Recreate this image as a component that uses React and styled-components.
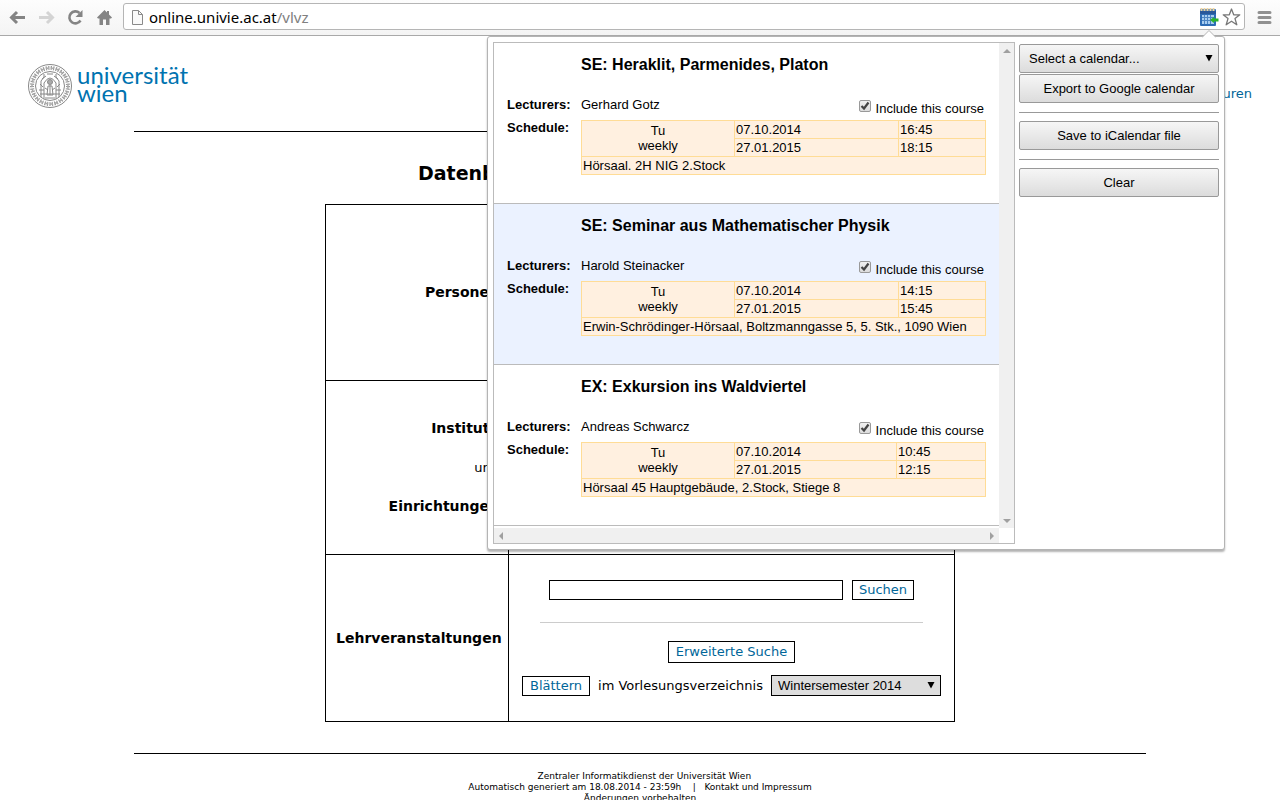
import React from "react";
import styled, { createGlobalStyle } from "styled-components";

const GlobalStyle = createGlobalStyle`
  * { box-sizing: border-box; }
  body { margin: 0; background: #fff; color: #000; font-family: "DejaVu Sans", Verdana, sans-serif; font-size: 13px; }
  button, input, select { margin: 0; }
`;

const Browser = styled.div`
  position: relative;
  display: flex;
  flex-direction: column;
  height: 100vh;
  overflow: hidden;
`;

/* ---------- browser toolbar ---------- */

const Toolbar = styled.header`
  display: flex;
  flex: none;
  align-items: center;
  height: 36px;
  padding: 0 8px 2px 7px;
  background: linear-gradient(#fdfdfd, #f4f4f4);
  border-bottom: 1px solid #a9a9a9;
`;

const ToolButton = styled.button`
  display: flex;
  flex: none;
  width: 20px;
  height: 20px;
  margin-right: 9px;
  padding: 0;
  border: 0;
  background: none;
`;

const AddressBar = styled.div`
  display: flex;
  flex: 1;
  align-items: center;
  height: 27px;
  margin-right: 11px;
  padding: 0 2px 0 7px;
  border: 1px solid #b5b5b5;
  border-radius: 3px;
  background: #fff;
`;

const Url = styled.div`
  flex: 1;
  margin-left: 5px;
  font: 15px/20px "Noto Sans", sans-serif;
  color: #000;
  span { color: #808080; }
`;

const BarButton = styled(ToolButton)`
  margin: 0 0 0 3px;
`;

const MenuButton = styled(ToolButton)`
  width: 16px;
  margin: 0;
`;

/* ---------- university page ---------- */

const Page = styled.div`
  flex: 1;
  min-height: 0;
  overflow: hidden;
`;

const Masthead = styled.div`
  display: flex;
  align-items: center;
  justify-content: space-between;
  height: 95px;
  padding: 5px 28px 0;
`;

const Logo = styled.a`
  display: flex;
  align-items: center;
  gap: 4px;
  color: #0073b0;
  text-decoration: none;
`;

const Wordmark = styled.span`
  display: block;
  padding-bottom: 5px;
  font: 24px/18px Lato, sans-serif;
`;

const TextLink = styled.a`
  color: #006699;
  text-decoration: none;
`;

const HeaderNav = styled.nav`
  padding-top: 14px;
`;

const PageRule = styled.hr`
  width: calc(100% - 268px);
  margin: 0 auto;
  border: 0;
  border-top: 1px solid #000;
`;

const Heading = styled.h1`
  width: 444px;
  margin: 29px auto 19px;
  font-size: 19px;
  line-height: 24px;
`;

const Directory = styled.table`
  width: 630px;
  margin: 0 auto;
  table-layout: fixed;
  border-collapse: collapse;
  border: 1px solid #000;
`;

const DirectoryRow = styled.tr`
  height: ${(p) => p.$height}px;
`;

const RowLabel = styled.th`
  width: 183px;
  padding: 0 9px 0 10px;
  border: 1px solid #000;
  text-align: right;
  white-space: nowrap;
  font-size: 14px;
  line-height: 39px;
  small { font-size: 13px; font-weight: normal; }
`;

const RowContent = styled.td`
  padding: 0 12px;
  border: 1px solid #000;
`;

const SearchForm = styled.form`
  display: flex;
  flex-direction: column;
  align-items: center;
`;

const FormLine = styled.div`
  display: flex;
  align-items: center;
  gap: ${(p) => p.$gap}px;
`;

const BrowseLine = styled(FormLine)`
  margin-top: 12px;
  white-space: nowrap;
`;

const SearchInput = styled.input`
  width: 294px;
  height: 20px;
  padding: 0 4px;
  border: 1px solid #000;
  background: #fff;
`;

const OutlineButton = styled.button`
  height: ${(p) => (p.$tall ? 22 : 20)}px;
  padding: 0 ${(p) => (p.$wide ? 7 : 6)}px;
  border: 1px solid #000;
  background: #fff;
  color: #006699;
  font: 13px/18px "DejaVu Sans", Verdana, sans-serif;
`;

const FormRule = styled.hr`
  width: 383px;
  margin: 22px 0 18px;
  border: 0;
  border-top: 1px solid #ccc;
`;

const Footer = styled.footer`
  margin-top: 31px;
  text-align: center;
  font-size: 9px;
  line-height: 11px;
  p { margin: 0; white-space: pre; }
  a { color: inherit; text-decoration: none; }
`;

const FooterText = styled.div`
  padding-top: 17px;
`;

/* ---------- select boxes ---------- */

const SelectFrame = styled.span`
  position: relative;
  display: block;
  width: ${(p) => p.$width};
`;

const SelectArrow = styled.svg`
  position: absolute;
  top: calc(50% - 4px);
  right: 6px;
  pointer-events: none;
`;

const SemesterSelect = styled.select`
  appearance: none;
  display: block;
  width: 100%;
  height: 21px;
  padding: 0 6px;
  border: 1px solid #000;
  border-radius: 0;
  background: #ddd;
  color: #000;
  font: 13px "Liberation Sans", Arial, sans-serif;
`;

/* ---------- extension popup ---------- */

const Popup = styled.aside`
  position: absolute;
  top: 36px;
  right: 55px;
  display: flex;
  gap: 4px;
  width: 738px;
  height: 514px;
  padding: 5px;
  border: 1px solid #b4b4b4;
  border-radius: 3px;
  background: #fff;
  box-shadow: 0 2px 2px rgba(0, 0, 0, 0.3);
  font: 13px/15px "Liberation Sans", Arial, sans-serif;
`;

const PopupTip = styled.svg`
  position: absolute;
  top: -7px;
  right: 8px;
`;

const CoursePane = styled.div`
  display: grid;
  flex: 1;
  grid-template: 1fr 15px / 1fr 15px;
  border: 1px solid #bbb;
`;

const CourseList = styled.div`
  overflow: hidden;
`;

const Course = styled.article`
  display: grid;
  grid-template-columns: 62px 1fr;
  grid-template-rows: 54px 22px 1fr;
  column-gap: 12px;
  height: 161px;
  padding: 0 13px;
  border-bottom: 1px solid #bbb;
  background: ${(p) => (p.$shaded ? "#ebf2ff" : "#fff")};
`;

const CourseTitle = styled.h2`
  grid-column: 2;
  margin: 13px 0 0;
  font-size: 16px;
  line-height: 18px;
`;

const FieldLabel = styled.b`
  grid-column: 1;
  padding-top: ${(p) => p.$top || 0}px;
`;

const LecturerLine = styled.div`
  display: flex;
  justify-content: space-between;
  padding-right: 2px;
`;

const Include = styled.label`
  display: flex;
  align-items: flex-start;
  gap: 5px;
  padding-top: 3px;
  line-height: 17px;
`;

const CheckFrame = styled.span`
  position: relative;
  display: block;
  width: 12px;
  height: 12px;
`;

const CheckBox = styled.input`
  appearance: none;
  display: block;
  width: 12px;
  height: 12px;
  border: 1px solid #999;
  border-radius: 2px;
  background: linear-gradient(#f0f0f0, #dcdcdc);
`;

const CheckMark = styled.svg`
  position: absolute;
  inset: 0;
  pointer-events: none;
`;

const Schedule = styled.table`
  width: 405px;
  height: 55px;
  margin-top: 1px;
  table-layout: fixed;
  border-collapse: collapse;
  background: #fff0e0;
  col:nth-child(1) { width: 153px; }
  col:nth-child(3) { width: ${(p) => p.$timeWidth}px; }
  td { padding: 1px; border: 1px solid #ffdc96; }
  td[rowspan] { padding-bottom: 3px; text-align: center; }
`;

const Scrollbar = styled.div`
  display: flex;
  flex-direction: ${(p) => (p.$horizontal ? "row" : "column")};
  align-items: center;
  justify-content: space-between;
  padding: ${(p) => (p.$horizontal ? "0 3px" : "4px 0 3px")};
  background: #f0f0f0;
`;

const Actions = styled.div`
  display: flex;
  flex-direction: column;
  width: 200px;
  padding-top: 2px;
`;

const actionLook = `
  width: 100%;
  height: 29px;
  border: 1px solid #999;
  border-radius: 2px;
  background: linear-gradient(#f6f6f6, #dcdcdc);
  color: #000;
  font: 13px "Liberation Sans", Arial, sans-serif;
`;

const ActionButton = styled.button`
  ${actionLook}
  padding: 0;
`;

const ActionSelect = styled.select`
  ${actionLook}
  appearance: none;
  display: block;
  margin-bottom: 1px;
  padding: 0 9px;
`;

const ActionRule = styled.hr`
  width: 100%;
  margin: 9px 0 8px;
  border: 0;
  border-top: 1px solid #999;
`;

/* ---------- drawings ---------- */

const BackIcon = ({ color }) => (
  <svg width="20" height="20" viewBox="0 0 20 20" fill="none" stroke={color} strokeWidth="3">
    <path d="M18 10.500H5M10 5L4.500 10.500L10 16" />
  </svg>
);

const ForwardIcon = ({ color }) => (
  <svg width="20" height="20" viewBox="0 0 20 20" fill="none" stroke={color} strokeWidth="3">
    <path d="M3 10.500H16M11 5L16.500 10.500L11 16" />
  </svg>
);

const ReloadIcon = () => (
  <svg width="20" height="20" viewBox="0 0 20 20">
    <path d="M15.500 13.500A6 6 0 1 1 14.500 6" fill="none" stroke="#848484" strokeWidth="2.6" />
    <path d="M17.500 3V10H10.500Z" fill="#848484" />
  </svg>
);

const HomeIcon = () => (
  <svg width="20" height="20" viewBox="0 0 20 20" fill="#848484">
    <path d="M10.500 3L13 5.500V4H15V7.500L18 10.500L17 11.500H15.500V18H12V12.500H9V18H5.500V11.500H4L3 10.500Z" />
  </svg>
);

const PageIcon = () => (
  <svg width="13" height="16" viewBox="0 0 13 16" fill="#fafafa" stroke="#8a8a8a">
    <path d="M1.500 1.500H7.500L11.500 5.500V15.500H1.500Z" />
    <path d="M7.500 1.500V5.500H11.500" fill="none" />
  </svg>
);

const CalendarIcon = () => (
  <svg width="20" height="20" viewBox="0 0 20 20">
    <rect x="1" y="2" width="16" height="17" rx="1" fill="#2e6cb5" />
    <rect x="1" y="4" width="16" height="3" fill="#28579a" />
    <rect x="3" y="8" width="12" height="9" fill="#a8cdf0" />
    <path d="M3 10.500H15M3 13.500H15M5.500 8V17M8.500 8V17M11.500 8V17" stroke="#4d84c2" />
    <path d="M2.500 1V4M5.500 1V4M8.500 1V4M11.500 1V4M14.500 1V4" stroke="#ecd3a0" strokeWidth="2" />
    <path d="M11 13L15 10V11.500H19.500V14.500H15V16Z" fill="#2cb52c" />
  </svg>
);

const StarIcon = () => (
  <svg width="20" height="20" viewBox="0 0 20 20" fill="#fff" stroke="#777" strokeWidth="1.300" strokeLinejoin="round">
    <path d="M9.500 2L11.700 7.800H17.800L13 11.600L14.800 17.800L9.500 14.200L4.200 17.800L6 11.600L1.200 7.800H7.300Z" />
  </svg>
);

const MenuIcon = () => (
  <svg width="16" height="20" viewBox="0 0 16 20" stroke="#909090" strokeWidth="3" strokeLinecap="round">
    <path d="M3 5.500H14M3 10.500H14M3 15.500H14" />
  </svg>
);

const Seal = () => (
  <svg width="45" height="45" viewBox="0 0 45 45" fill="none" stroke="#888">
    <circle cx="22" cy="22" r="21.500" />
    <circle cx="22" cy="22" r="18" strokeWidth="4" strokeDasharray="1.200 1.300" stroke="#999" />
    <circle cx="22" cy="22" r="18" strokeWidth="1.500" stroke="#aaa" strokeDasharray="3 2" />
    <circle cx="22" cy="22" r="14.500" />
    <path d="M13 33V17L16 13V10M31 33V17L28 13V10M16 33V19Q22 9 28 19V33M11 26H16M28 26H33M12 30H32M12 20L15 23M32 20L29 23" />
    <circle cx="22" cy="18" r="2.500" fill="#aaa" />
    <path d="M19 31L20 22H24L25 31ZM17 24L20 26M27 24L24 26M22 21V31" />
    <path d="M14 15L18 12M30 15L26 12M19 10H25M15 34H29" />
  </svg>
);

const DownTriangle = () => (
  <SelectArrow width="8" height="8" viewBox="0 0 8 8">
    <path d="M0.500 0H7.500L4 6.500Z" fill="#000" />
  </SelectArrow>
);

const trianglePaths = {
  up: "M0 6L4 2L8 6Z",
  down: "M0 2L4 6L8 2Z",
  left: "M6 0L2 4L6 8Z",
  right: "M2 0L6 4L2 8Z",
};

const ScrollArrow = ({ to }) => (
  <svg width="8" height="8" viewBox="0 0 8 8" fill="#a0a0a0">
    <path d={trianglePaths[to]} />
  </svg>
);

/* ---------- content ---------- */

const courses = [
  {
    title: "SE: Heraklit, Parmenides, Platon",
    lecturer: "Gerhard Gotz",
    start: "16:45",
    end: "18:15",
    place: "Hörsaal. 2H NIG 2.Stock",
    timeWidth: 87,
  },
  {
    title: "SE: Seminar aus Mathematischer Physik",
    lecturer: "Harold Steinacker",
    start: "14:15",
    end: "15:45",
    place: "Erwin-Schrödinger-Hörsaal, Boltzmanngasse 5, 5. Stk., 1090 Wien",
    timeWidth: 87,
  },
  {
    title: "EX: Exkursion ins Waldviertel",
    lecturer: "Andreas Schwarcz",
    start: "10:45",
    end: "12:15",
    place: "Hörsaal 45 Hauptgebäude, 2.Stock, Stiege 8",
    timeWidth: 89,
  },
];

const CourseItem = ({ course, shaded }) => (
  <Course $shaded={shaded}>
    <CourseTitle>{course.title}</CourseTitle>
    <FieldLabel>Lecturers:</FieldLabel>
    <LecturerLine>
      <span>{course.lecturer}</span>
      <Include>
        <CheckFrame>
          <CheckBox type="checkbox" defaultChecked />
          <CheckMark width="12" height="12" viewBox="0 0 12 12" fill="none" stroke="#444" strokeWidth="2.200">
            <path d="M2.500 6L5 8.500L9.500 2.500" />
          </CheckMark>
        </CheckFrame>
        Include this course
      </Include>
    </LecturerLine>
    <FieldLabel $top={1}>Schedule:</FieldLabel>
    <div>
      <Schedule $timeWidth={course.timeWidth}>
        <colgroup>
          <col />
          <col />
          <col />
        </colgroup>
        <tbody>
          <tr>
            <td rowSpan={2}>
              Tu
              <br />
              weekly
            </td>
            <td>07.10.2014</td>
            <td>{course.start}</td>
          </tr>
          <tr>
            <td>27.01.2015</td>
            <td>{course.end}</td>
          </tr>
          <tr>
            <td colSpan={3}>{course.place}</td>
          </tr>
        </tbody>
      </Schedule>
    </div>
  </Course>
);

const CourseSearch = () => (
  <SearchForm>
    <FormLine $gap={9}>
      <SearchInput type="text" aria-label="Lehrveranstaltungen" />
      <OutlineButton type="button">Suchen</OutlineButton>
    </FormLine>
    <FormRule />
    <OutlineButton type="button" $tall $wide>Erweiterte Suche</OutlineButton>
    <BrowseLine $gap={8}>
      <OutlineButton type="button" $wide>Blättern</OutlineButton>
      <label htmlFor="semester">im Vorlesungsverzeichnis</label>
      <SelectFrame $width="170px">
        <SemesterSelect id="semester">
          <option>Wintersemester 2014</option>
        </SemesterSelect>
        <DownTriangle />
      </SelectFrame>
    </BrowseLine>
  </SearchForm>
);

export default function App() {
  return (
    <Browser>
      <GlobalStyle />
      <Toolbar>
        <ToolButton aria-label="Back"><BackIcon color="#848484" /></ToolButton>
        <ToolButton aria-label="Forward"><ForwardIcon color="#d4d4d4" /></ToolButton>
        <ToolButton aria-label="Reload"><ReloadIcon /></ToolButton>
        <ToolButton aria-label="Home"><HomeIcon /></ToolButton>
        <AddressBar>
          <PageIcon />
          <Url>online.univie.ac.at<span>/vlvz</span></Url>
          <BarButton aria-label="Calendar export"><CalendarIcon /></BarButton>
          <BarButton aria-label="Bookmark"><StarIcon /></BarButton>
        </AddressBar>
        <MenuButton aria-label="Menu"><MenuIcon /></MenuButton>
      </Toolbar>

      <Page>
        <Masthead>
          <Logo href="#home">
            <Seal />
            <Wordmark>universität<br />wien</Wordmark>
          </Logo>
          <HeaderNav>
            <TextLink href="#strukturen">Strukturen</TextLink>
          </HeaderNav>
        </Masthead>
        <PageRule />
        <Heading>Datenbank</Heading>
        <Directory>
          <tbody>
            <DirectoryRow $height={176}>
              <RowLabel scope="row">Personen</RowLabel>
              <RowContent />
            </DirectoryRow>
            <DirectoryRow $height={174}>
              <RowLabel scope="row">
                Institute<br /><small>und</small><br />Einrichtungen
              </RowLabel>
              <RowContent />
            </DirectoryRow>
            <DirectoryRow $height={167}>
              <RowLabel scope="row">Lehrveranstaltungen</RowLabel>
              <RowContent>
                <CourseSearch />
              </RowContent>
            </DirectoryRow>
          </tbody>
        </Directory>
        <Footer>
          <PageRule />
          <FooterText>
            <p>{"\u00a0\u00a0\u00a0Zentraler Informatikdienst der Universität Wien"}</p>
            <p>
              {"Automatisch generiert am 18.08.2014 - 23:59h \u00a0\u00a0 | \u00a0 "}
              <a href="#kontakt">Kontakt und Impressum</a>
            </p>
            <p>Änderungen vorbehalten</p>
          </FooterText>
        </Footer>
      </Page>

      <Popup>
        <PopupTip width="14" height="8" viewBox="0 0 14 8">
          <path d="M0 7.500L7 0.500L14 7.500" fill="#fff" stroke="#b4b4b4" />
        </PopupTip>
        <CoursePane>
          <CourseList>
            {courses.map((course, i) => (
              <CourseItem key={course.title} course={course} shaded={i % 2 === 1} />
            ))}
          </CourseList>
          <Scrollbar>
            <ScrollArrow to="up" />
            <ScrollArrow to="down" />
          </Scrollbar>
          <Scrollbar $horizontal>
            <ScrollArrow to="left" />
            <ScrollArrow to="right" />
          </Scrollbar>
        </CoursePane>
        <Actions>
          <SelectFrame $width="100%">
            <ActionSelect aria-label="Calendar">
              <option>Select a calendar...</option>
            </ActionSelect>
            <DownTriangle />
          </SelectFrame>
          <ActionButton type="button">Export to Google calendar</ActionButton>
          <ActionRule />
          <ActionButton type="button">Save to iCalendar file</ActionButton>
          <ActionRule />
          <ActionButton type="button">Clear</ActionButton>
        </Actions>
      </Popup>
    </Browser>
  );
}
